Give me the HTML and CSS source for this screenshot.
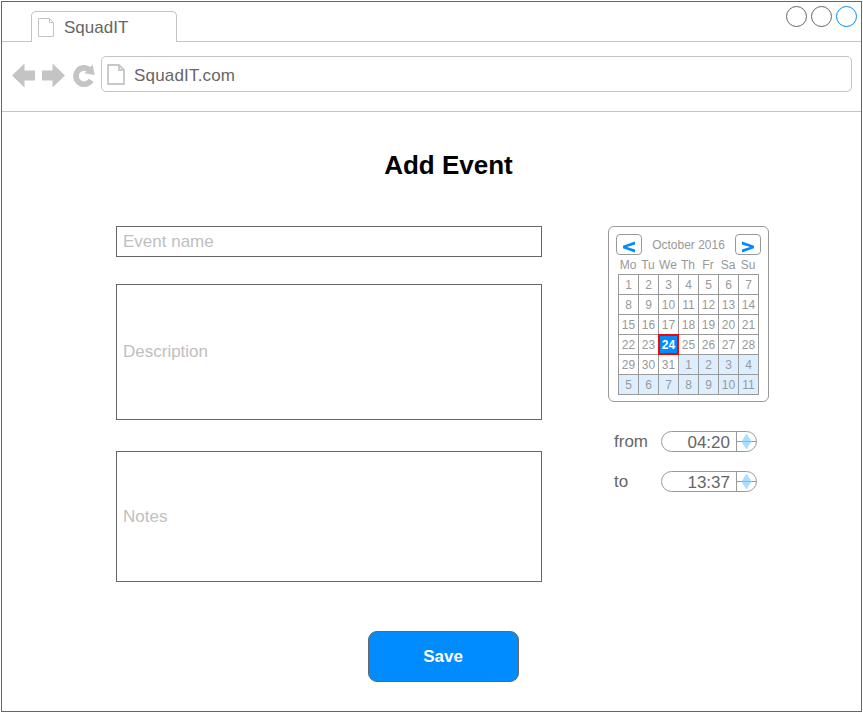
FILE: index.html
```html
<!DOCTYPE html>
<html lang="en">
<head>
<meta charset="utf-8">
<title>SquadIT</title>
<link rel="stylesheet" href="styles.css">
</head>
<body>
<div class="window">
  <header class="tabbar">
    <div class="tab">
      <svg class="tab-icon" width="16" height="19" viewBox="0 0 16 19"><path d="M.5.5h11l4 4v14H.5zM11.5.5v4h4" fill="none" stroke="#c4c4c4"/></svg>
      <span>SquadIT</span>
    </div>
    <div class="controls">
      <span class="circle"></span><span class="circle"></span><span class="circle active"></span>
    </div>
  </header>
  <nav class="toolbar">
    <svg class="nav-icons" width="84" height="26" viewBox="0 0 84 26" fill="#c4c4c4">
      <path d="M0 12.500 12.500 .5V7.500H23v10H12.500V24.500z"/>
      <path d="M53 12.500 40.500 .5V7.500H30v10h10.500V24.500z"/>
      <path d="M79.200 17.300A8.200 8.200 0 1 1 77.500 6.800" fill="none" stroke="#c4c4c4" stroke-width="5.600"/>
      <path d="M80.500 1.500 82.700 12 72.500 10.200z"/>
    </svg>
    <div class="address">
      <svg width="18" height="21" viewBox="0 0 18 21"><path d="M1 1h11l5 5v14H1zM12 1v5h5" fill="none" stroke="#c8c8c8" stroke-width="1.900"/></svg>
      <span>SquadIT.com</span>
    </div>
  </nav>
  <main>
    <h1>Add Event</h1>
    <div class="columns">
      <div class="fields">
        <div class="field name">Event name</div>
        <div class="field description">Description</div>
        <div class="field notes">Notes</div>
      </div>
      <aside>
        <div class="calendar">
          <div class="cal-head">
            <span class="step"><svg width="24" height="19" viewBox="0 0 24 19"><path d="M18 6.500v3L10 12l8 2.500v3L6 13.200v-2.400z"/></svg></span>
            <span class="month">October 2016</span>
            <span class="step"><svg width="24" height="19" viewBox="0 0 24 19"><path d="M6 6.500v3l8 2.500-8 2.500v3l12-4.300v-2.400z"/></svg></span>
          </div>
          <div class="weekdays"><span>Mo</span><span>Tu</span><span>We</span><span>Th</span><span>Fr</span><span>Sa</span><span>Su</span></div>
          <div class="days">
            <span>1</span><span>2</span><span>3</span><span>4</span><span>5</span><span>6</span><span>7</span>
            <span>8</span><span>9</span><span>10</span><span>11</span><span>12</span><span>13</span><span>14</span>
            <span>15</span><span>16</span><span>17</span><span>18</span><span>19</span><span>20</span><span>21</span>
            <span>22</span><span>23</span><span class="selected">24</span><span>25</span><span>26</span><span>27</span><span>28</span>
            <span>29</span><span>30</span><span>31</span><span class="next">1</span><span class="next">2</span><span class="next">3</span><span class="next">4</span>
            <span class="next">5</span><span class="next">6</span><span class="next">7</span><span class="next">8</span><span class="next">9</span><span class="next">10</span><span class="next">11</span>
          </div>
        </div>
        <div class="time">
          <span class="label">from</span>
          <div class="spinner"><span class="value">04:20</span><svg width="19" height="19" viewBox="0 0 19 19"><path d="M0 9.500h19" stroke="#999"/><path d="M9.500 1.500 14.500 9.500 9.500 17.500 4.500 9.500z" fill="#aaddff"/><path d="M4.500 9.500h10" stroke="#88bbdd"/></svg></div>
        </div>
        <div class="time">
          <span class="label">to</span>
          <div class="spinner"><span class="value">13:37</span><svg width="19" height="19" viewBox="0 0 19 19"><path d="M0 9.500h19" stroke="#999"/><path d="M9.500 1.500 14.500 9.500 9.500 17.500 4.500 9.500z" fill="#aaddff"/><path d="M4.500 9.500h10" stroke="#88bbdd"/></svg></div>
        </div>
      </aside>
    </div>
    <button class="save" type="button">Save</button>
  </main>
</div>
</body>
</html>
```
FILE: styles.css
```css
* { box-sizing: border-box; }
body {
  margin: 0;
  padding: 1px;
  background: #fff;
  color: #666;
  font: 17px/20px "Liberation Sans", Arial, sans-serif;
}
svg { display: block; flex: none; }
.window { width: 861px; height: 711px; border: 1px solid #666; overflow: hidden; }

.tabbar {
  display: flex;
  justify-content: space-between;
  height: 40px;
  padding: 0 4px 0 29px;
  border-bottom: 1px solid #c4c4c4;
}
.tab {
  display: flex;
  gap: 10px;
  width: 146px;
  height: 31px;
  margin-top: 9px;
  padding: 6px 0 0 6px;
  border: 1px solid #c4c4c4;
  border-bottom: 0;
  border-radius: 5px 5px 0 0;
  background: #fff;
}
.controls { display: flex; gap: 4px; padding-top: 4px; }
.circle { width: 21px; height: 21px; border: 1px solid #666; border-radius: 50%; }
.circle.active { border-color: #008cff; }

.toolbar {
  display: flex;
  height: 70px;
  padding: 14px 9px 0 10px;
  border-bottom: 1px solid #c4c4c4;
}
.nav-icons { margin: 7px 5px 0 0; }
.address {
  display: flex;
  flex: 1;
  gap: 9px;
  height: 36px;
  padding: 7px 0 0 5px;
  border: 1px solid #c4c4c4;
  border-radius: 5px;
}
.address span { padding-top: 2px; letter-spacing: 0.18px; }

h1 {
  margin: 38px 0 0;
  padding-left: 34px;
  color: #000;
  font-size: 26px;
  line-height: 30px;
  text-align: center;
}
.columns { display: flex; gap: 66px; margin: 46px 0 0 114px; }
.fields { width: 426px; }
.field {
  display: flex;
  align-items: center;
  padding-left: 6px;
  border: 1px solid #666;
  color: #c0c0c0;
}
.name { height: 31px; }
.description { height: 136px; margin-top: 27px; }
.notes { height: 131px; margin-top: 31px; }

.calendar {
  width: 161px;
  height: 176px;
  margin-bottom: 29px;
  padding: 7px;
  border: 1px solid #999;
  border-radius: 6px;
  color: #999;
  font-size: 12px;
}
.cal-head { display: flex; justify-content: space-between; height: 21px; }
.month { padding-top: 1px; }
.step { width: 26px; height: 21px; border: 1px solid #999; border-radius: 4px; }
.step path { fill: #008cff; }
.weekdays { display: grid; grid-template-columns: repeat(7, 20px); margin-left: 2px; }
.weekdays span { display: flex; justify-content: center; }
.days {
  display: grid;
  grid-template-columns: repeat(7, 20px);
  grid-auto-rows: 20px;
  width: 141px;
  height: 121px;
  margin: -1px 0 0 2px;
  border: solid #999;
  border-width: 1px 0 0 1px;
}
.days span { border: solid #999; border-width: 0 1px 1px 0; text-align: center; line-height: 20px; }
.days .next { background: #ddeeff; }
.days .selected {
  z-index: 1;
  margin: -1px 0 0 -1px;
  border: 2px solid #f00;
  background: #008cff;
  color: #fff;
  font-weight: bold;
  line-height: 18px;
}

.time { display: flex; height: 21px; margin-bottom: 19px; padding-left: 6px; }
.label { width: 47px; padding-top: 1px; }
.spinner {
  display: flex;
  width: 96px;
  height: 21px;
  border: 1px solid #999;
  border-radius: 11px;
  overflow: hidden;
}
.value { width: 75px; padding-right: 6px; border-right: 1px solid #999; text-align: right; line-height: 21px; }

.save {
  display: block;
  width: 151px;
  height: 51px;
  margin: 49px 0 0 366px;
  padding: 0 1px 0 0;
  border: 1px solid #666;
  border-radius: 9px;
  background: #008cff;
  color: #fff;
  font: bold 17px/20px "Liberation Sans", Arial, sans-serif;
}
```
